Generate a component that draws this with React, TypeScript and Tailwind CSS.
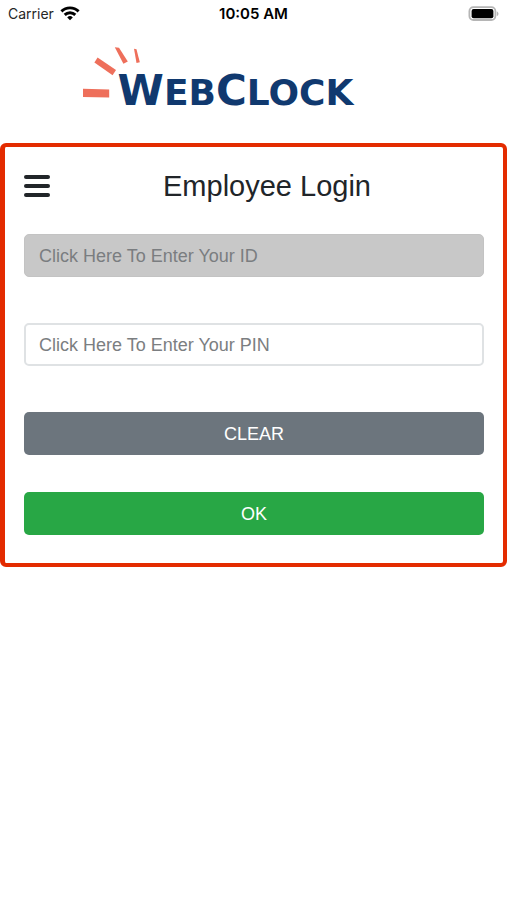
import { useState } from 'react';

function StatusBar() {
  return (
    <header className="grid h-7 grid-cols-3 items-center px-2 font-['Inter',sans-serif] text-sm text-neutral-800">
      <div className="flex items-center gap-1.5">
        <span>Carrier</span>
        <svg viewBox="0 0 20 16" className="h-4 w-5" fill="none" stroke="#000" strokeWidth="2.9" aria-label="Wi-Fi">
          <path d="M1.4 5.4a12.2 12.2 0 0 1 17.2 0" />
          <path d="M4.7 8.9a7.5 7.5 0 0 1 10.6 0" />
          <path d="M10 14.3l-2.8-2.9a4 4 0 0 1 5.6 0z" fill="#000" stroke="none" />
        </svg>
      </div>
      <span className="text-center text-[15px] font-semibold text-black">10:05 AM</span>
      <svg viewBox="0 0 32 16" className="h-4 w-8 justify-self-end" aria-label="Battery">
        <rect x="2.4" y="1.2" width="26" height="12.8" rx="4" fill="#fff" stroke="#b5b5b5" strokeWidth="1.8" />
        <rect x="4.6" y="3" width="21.8" height="9.2" rx="2" fill="#000" />
        <path d="M29.8 5.4c2.2.6 2.2 4 0 4.6z" fill="#b5b5b5" />
      </svg>
    </header>
  );
}

function Logo() {
  return (
    <div className="flex h-[115px] items-start justify-center pr-18 pt-[18px]">
      <div className="flex items-start">
        <svg viewBox="0 0 58 54" className="-mr-[22px] h-[54px] w-[58px] shrink-0" fill="#ee6f5b" aria-hidden="true">
          <path d="M1 42.8l26.2.8v8L1 51z" />
          <path d="M15.6 11.6l18.4 12.3-3.4 5.3L12.4 16.5z" />
          <path d="M32.8 1.3l4.2.4 8.8 13.8-4.4 2.2z" />
          <path d="M52 2.8l2.5.5 3.3 13-3.3.8z" />
        </svg>
        <div className="pt-[22px] font-['DejaVu_Sans',sans-serif] text-[42px] font-bold uppercase leading-[46px] text-[#10396f]">
          W<span className="text-[36px]">eb</span>C<span className="text-[36px]">lock</span>
        </div>
      </div>
    </div>
  );
}

export default function App() {
  const [id, setId] = useState('');
  const [pin, setPin] = useState('');

  const clear = () => {
    setId('');
    setPin('');
  };

  return (
    <div className="min-h-screen bg-white">
      <StatusBar />
      <Logo />

      {/* Login panel */}
      <main className="rounded-md border-4 border-l-[5px] border-[#e32b00] px-[19px] pb-7 pt-[21px] font-['Liberation_Sans',sans-serif] text-lg">
        <div className="mb-[30px] flex h-9 items-center">
          <button type="button" aria-label="Menu" className="flex w-[26px] flex-col gap-[5px]">
            <span className="h-1 w-full rounded-xs bg-[#212529]" />
            <span className="h-1 w-full rounded-xs bg-[#212529]" />
            <span className="h-1 w-full rounded-xs bg-[#212529]" />
          </button>
          <h1 className="flex-1 text-center text-[29px] leading-9 text-[#212529]">Employee Login</h1>
        </div>

        <form className="flex flex-col" onSubmit={(e) => e.preventDefault()}>
          <input
            type="text"
            aria-label="Employee ID"
            placeholder="Click Here To Enter Your ID"
            value={id}
            onChange={(e) => setId(e.target.value)}
            className="mb-[46px] h-[43px] w-full rounded-[5px] border border-[#c3c3c3] bg-[#c8c8c8] px-3.5 pt-0.5 placeholder:text-[#7a7d80]"
          />
          <input
            type="password"
            aria-label="PIN"
            placeholder="Click Here To Enter Your PIN"
            value={pin}
            onChange={(e) => setPin(e.target.value)}
            className="mb-[46px] h-[43px] w-full rounded-[5px] border-2 border-[#dfe2e4] bg-white px-[13px] pt-0.5 placeholder:text-[#7b7e81]"
          />
          <button type="button" onClick={clear} className="mb-[37px] h-[43px] rounded-[5px] bg-[#6c757d] text-white">
            CLEAR
          </button>
          <button type="submit" className="h-[43px] rounded-[5px] bg-[#28a745] text-white">
            OK
          </button>
        </form>
      </main>
    </div>
  );
}
